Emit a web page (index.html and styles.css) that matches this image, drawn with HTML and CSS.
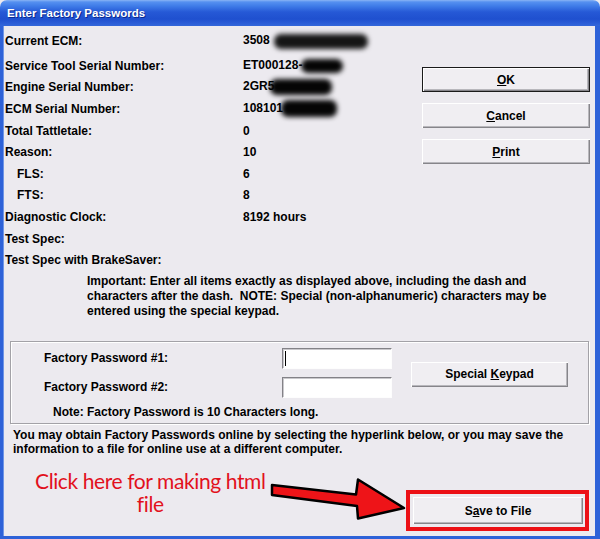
FILE: index.html
```html
<!DOCTYPE html>
<html>
<head>
<meta charset="utf-8">
<title>Enter Factory Passwords</title>
<link rel="stylesheet" href="styles.css">
</head>
<body>
<div class="window">
  <div class="titlebar"><span class="title">Enter Factory Passwords</span></div>
  <div class="client">
    <div class="top">
      <div class="info">
        <div class="row first"><span class="lbl">Current ECM:</span><span class="val">3508 <span class="blot blot-1"></span></span></div>
        <div class="row"><span class="lbl">Service Tool Serial Number:</span><span class="val">ET000128-<span class="blot blot-2"></span></span></div>
        <div class="row"><span class="lbl">Engine Serial Number:</span><span class="val">2GR5<span class="blot blot-3"></span></span></div>
        <div class="row"><span class="lbl">ECM Serial Number:</span><span class="val">108101<span class="blot blot-4"></span></span></div>
        <div class="row"><span class="lbl">Total Tattletale:</span><span class="val">0</span></div>
        <div class="row"><span class="lbl">Reason:</span><span class="val">10</span></div>
        <div class="row"><span class="lbl sub">FLS:</span><span class="val">6</span></div>
        <div class="row"><span class="lbl sub">FTS:</span><span class="val">8</span></div>
        <div class="row"><span class="lbl">Diagnostic Clock:</span><span class="val">8192 hours</span></div>
        <div class="row"><span class="lbl">Test Spec:</span><span class="val"></span></div>
        <div class="row"><span class="lbl">Test Spec with BrakeSaver:</span><span class="val"></span></div>
      </div>
      <div class="side">
        <div class="btn default"><span class="cap"><u>O</u>K</span></div>
        <div class="btn"><span class="cap"><u>C</u>ancel</span></div>
        <div class="btn"><span class="cap"><u>P</u>rint</span></div>
      </div>
    </div>
    <p class="important">Important: Enter all items exactly as displayed above, including the dash and<br>characters after the dash.&nbsp; NOTE: Special (non-alphanumeric) characters may be<br>entered using the special keypad.</p>
    <div class="group">
      <span class="plabel r1">Factory Password #1:</span>
      <div class="field r1"><span class="caret"></span></div>
      <span class="plabel r2">Factory Password #2:</span>
      <div class="field r2"></div>
      <div class="btn keypad"><span class="cap">Special <u>K</u>eypad</span></div>
      <span class="note">Note: Factory Password is 10 Characters long.</span>
    </div>
    <p class="online">You may obtain Factory Passwords online by selecting the hyperlink below, or you may save the<br>information to a file for online use at a different computer.</p>
    <div class="bottom">
      <div class="annot">Click here for making html<br>file</div>
      <div class="highlight"><div class="btn save"><span class="cap">S<u>a</u>ve to File</span></div></div>
    </div>
  </div>
  <svg class="arrow" width="600" height="539" viewBox="0 0 600 539">
    <path d="M272,485 L356,494.5 L358,479.5 L404,508 L358,518.5 L357,506 L272,495 Z" fill="#ee1418" stroke="#000" stroke-width="2.5" stroke-linejoin="round"/>
  </svg>
</div>
</body>
</html>
```
FILE: styles.css
```css
html, body {
  margin: 0;
  padding: 0;
  background: #ECEAEF;
}
.window {
  position: relative;
  width: 600px;
  height: 539px;
  display: flex;
  flex-direction: column;
  font-family: "Liberation Sans", Arial, sans-serif;
  font-weight: bold;
  font-size: 12px;
  color: #000;
}
.titlebar {
  height: 26px;
  flex: none;
  border-radius: 7px 7px 0 0;
  background: linear-gradient(to bottom, #8ab4f5 0px, #5590f0 2px, #3f7ce8 6px, #2659d6 12px, #1f50cf 19px, #2a5cd6 23px, #3367da 26px);
  display: flex;
  align-items: center;
  padding-left: 7px;
}
.title {
  color: #fff;
  font-size: 11.5px;
  text-shadow: 1px 1px 0 #0c2a90;
}
.client {
  flex: 1;
  display: flex;
  flex-direction: column;
  background: #ECEAEF;
  border-left: 3px solid #2e62d8;
  border-right: 5px solid #2e62d8;
  border-bottom: 3px solid #2e62d8;
  box-shadow: inset 1px 0 0 #6f95e6;
}
.top {
  display: flex;
  align-items: flex-start;
  padding: 3px 0 0 2px;
}
.info {
  width: 400px;
}
.row {
  display: flex;
  align-items: center;
  height: 21.6px;
}
.row.first {
  height: 24px;
  margin-bottom: 2px;
}
.lbl {
  width: 238px;
  flex: none;
  white-space: nowrap;
}
.lbl.sub {
  padding-left: 12px;
  width: 226px;
}
.val {
  white-space: nowrap;
}
.blot {
  display: inline-block;
  height: 14px;
  background: #050505;
  border-radius: 7px;
  filter: blur(2.5px);
  vertical-align: middle;
}
.blot-1 { width: 94px; margin-left: 1px; height: 15px; background: #151515; }
.blot-2 { width: 42px; margin-left: -1px; }
.blot-3 { width: 62px; margin-left: -4px; height: 16px; }
.blot-4 { width: 56px; margin-left: -2px; height: 17px; }
.side {
  margin: 38px 5px 0 auto;
  width: 168px;
  display: flex;
  flex-direction: column;
  gap: 11px;
}
.btn {
  box-sizing: border-box;
  height: 25px;
  display: flex;
  align-items: center;
  justify-content: center;
  background: #F0EEF2;
  box-shadow: inset 1px 1px 0 #fff, inset -1px -1px 0 #86858a, inset -2px -2px 0 #b8b7bc;
}
.cap {
  white-space: pre;
}
.btn.default {
  border: 1px solid #1a1a1a;
}
.important {
  margin: 3.5px 0 0 84px;
  line-height: 15px;
  white-space: nowrap;
}
.group {
  box-sizing: border-box;
  height: 83px;
  margin: 21.5px 6px 0 7px;
  border: 1px solid #a3a2a7;
  box-shadow: inset 1px 1px 0 #fff, 1px 1px 0 #fff;
  display: grid;
  grid-template-columns: 238px 110px 19px 157px;
  grid-template-rows: 21px 21px 14px;
  row-gap: 8px;
  padding: 6px 0 0 33px;
  align-items: center;
}
.plabel.r1 { grid-row: 1; grid-column: 1; }
.plabel.r2 { grid-row: 2; grid-column: 1; }
.field {
  box-sizing: border-box;
  height: 21px;
  background: #fff;
  border-top: 1px solid #838287;
  border-left: 1px solid #838287;
  border-bottom: 1px solid #fdfdfd;
  border-right: 1px solid #fdfdfd;
  box-shadow: inset 1px 1px 0 #c9c8cc;
  grid-column: 2;
  display: flex;
  align-items: center;
  padding-left: 2px;
}
.field.r1 { grid-row: 1; }
.field.r2 { grid-row: 2; }
.caret {
  width: 1px;
  height: 15px;
  background: #000;
}
.keypad {
  grid-column: 4;
  grid-row: 1 / 3;
  align-self: center;
  margin-top: 3px;
}
.note {
  grid-row: 3;
  grid-column: 1 / 3;
  margin-left: 9px;
  margin-top: -2px;
  white-space: nowrap;
}
.online {
  margin: 4px 0 0 10px;
  line-height: 14px;
  white-space: nowrap;
}
.bottom {
  flex: 1;
  display: flex;
  justify-content: space-between;
  align-items: flex-end;
  padding: 0 6px 5px 32px;
}
.annot {
  align-self: flex-start;
  margin-top: 13px;
  font-family: Lato, "Open Sans", sans-serif;
  font-weight: normal;
  font-size: 21px;
  line-height: 23px;
  color: #e2111c;
  text-align: center;
  letter-spacing: -0.4px;
}
.highlight {
  box-sizing: border-box;
  width: 183px;
  height: 41px;
  border: 4px solid #ec1016;
  padding: 3px 2px 3px 3px;
}
.btn.save {
  height: 27px;
  width: 170px;
}
.arrow {
  position: absolute;
  left: 0;
  top: 0;
  pointer-events: none;
}
```
